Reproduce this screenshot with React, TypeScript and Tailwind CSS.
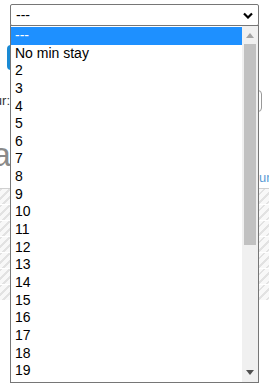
import React from 'react'

const options = ['---', 'No min stay', ...Array.from({ length: 18 }, (_, i) => String(i + 2))]

const Chevron = () => (
  <svg width="10" height="7" viewBox="0 0 10 7" className="text-black">
    <polyline points="1,1.5 5,5.5 9,1.5" fill="none" stroke="currentColor" strokeWidth="2.2" />
  </svg>
)

const App: React.FC = () => {
  return (
    <div className="relative w-[269px] h-[389px] overflow-hidden bg-white font-['Liberation_Sans',Arial,sans-serif] text-black">
      {/* the closed select */}
      <div className="pt-[4px] px-[10px]">
        <div className="h-[22px] border border-[#767676] rounded-[2px] flex items-center justify-between pl-[5px] pr-[5px] text-[14px]">
          <span>---</span>
          <Chevron />
        </div>
      </div>

      {/* page behind the open list */}
      <div className="mt-[19px] flex">
        <div className="ml-[7px] w-[60px] h-[25px] bg-[#1a8ad4] rounded-l-[4px]" />
      </div>
      <div className="mt-[20px] flex items-center justify-between h-[22px]">
        <div className="w-[10px] overflow-hidden flex justify-end whitespace-nowrap text-[13px] text-[#333]">Hour:</div>
        <div className="w-[30px] h-[22px] border border-[#999] rounded-[4px] mr-[7px]" />
      </div>
      <div className="mt-[22px] flex">
        <div className="w-[11px] overflow-hidden flex justify-end whitespace-nowrap text-[34px] leading-[40px] text-[#8a8a8a]">Da</div>
      </div>
      <div className="mt-[-4px] pl-[259px] whitespace-nowrap text-[13px] leading-[16px] text-[#5b9bd5]">ur</div>
      <div className="mt-[2px] border-t border-[#d0d0d0]">
        {Array.from({ length: 7 }).map((_, i) => (
          <div
            key={i}
            className="h-[15px] mb-[1px] bg-[repeating-linear-gradient(135deg,#e2e2e2_0,#e2e2e2_2px,#f8f8f8_2px,#f8f8f8_6px)]"
          />
        ))}
      </div>

      {/* the open option list */}
      <div className="absolute top-[25px] left-[10px] w-[249px] h-[358px] border border-[#767676] bg-white flex text-[14px]">
        <div className="flex-1 pt-[1px] overflow-hidden">
          {options.map((o, i) => (
            <div
              key={o}
              className={`h-[17.65px] leading-[17.65px] pl-[4px] whitespace-nowrap ${i === 0 ? 'bg-[#1e90ff] text-white' : ''}`}
            >
              {o}
            </div>
          ))}
        </div>
        <div className="w-[16px] pt-[1px] pb-[1px] bg-[#f0f0f0] flex flex-col">
          <div className="h-[17px] flex items-center justify-center">
            <svg width="8" height="5" viewBox="0 0 8 5"><polygon points="0,5 4,0 8,5" fill="#a3a3a3" /></svg>
          </div>
          <div className="mx-[2px] h-[201px] bg-[#c1c1c1]" />
          <div className="flex-1" />
          <div className="h-[17px] flex items-center justify-center">
            <svg width="8" height="5" viewBox="0 0 8 5"><polygon points="0,0 8,0 4,5" fill="#505050" /></svg>
          </div>
        </div>
      </div>
    </div>
  )
}

export default App
